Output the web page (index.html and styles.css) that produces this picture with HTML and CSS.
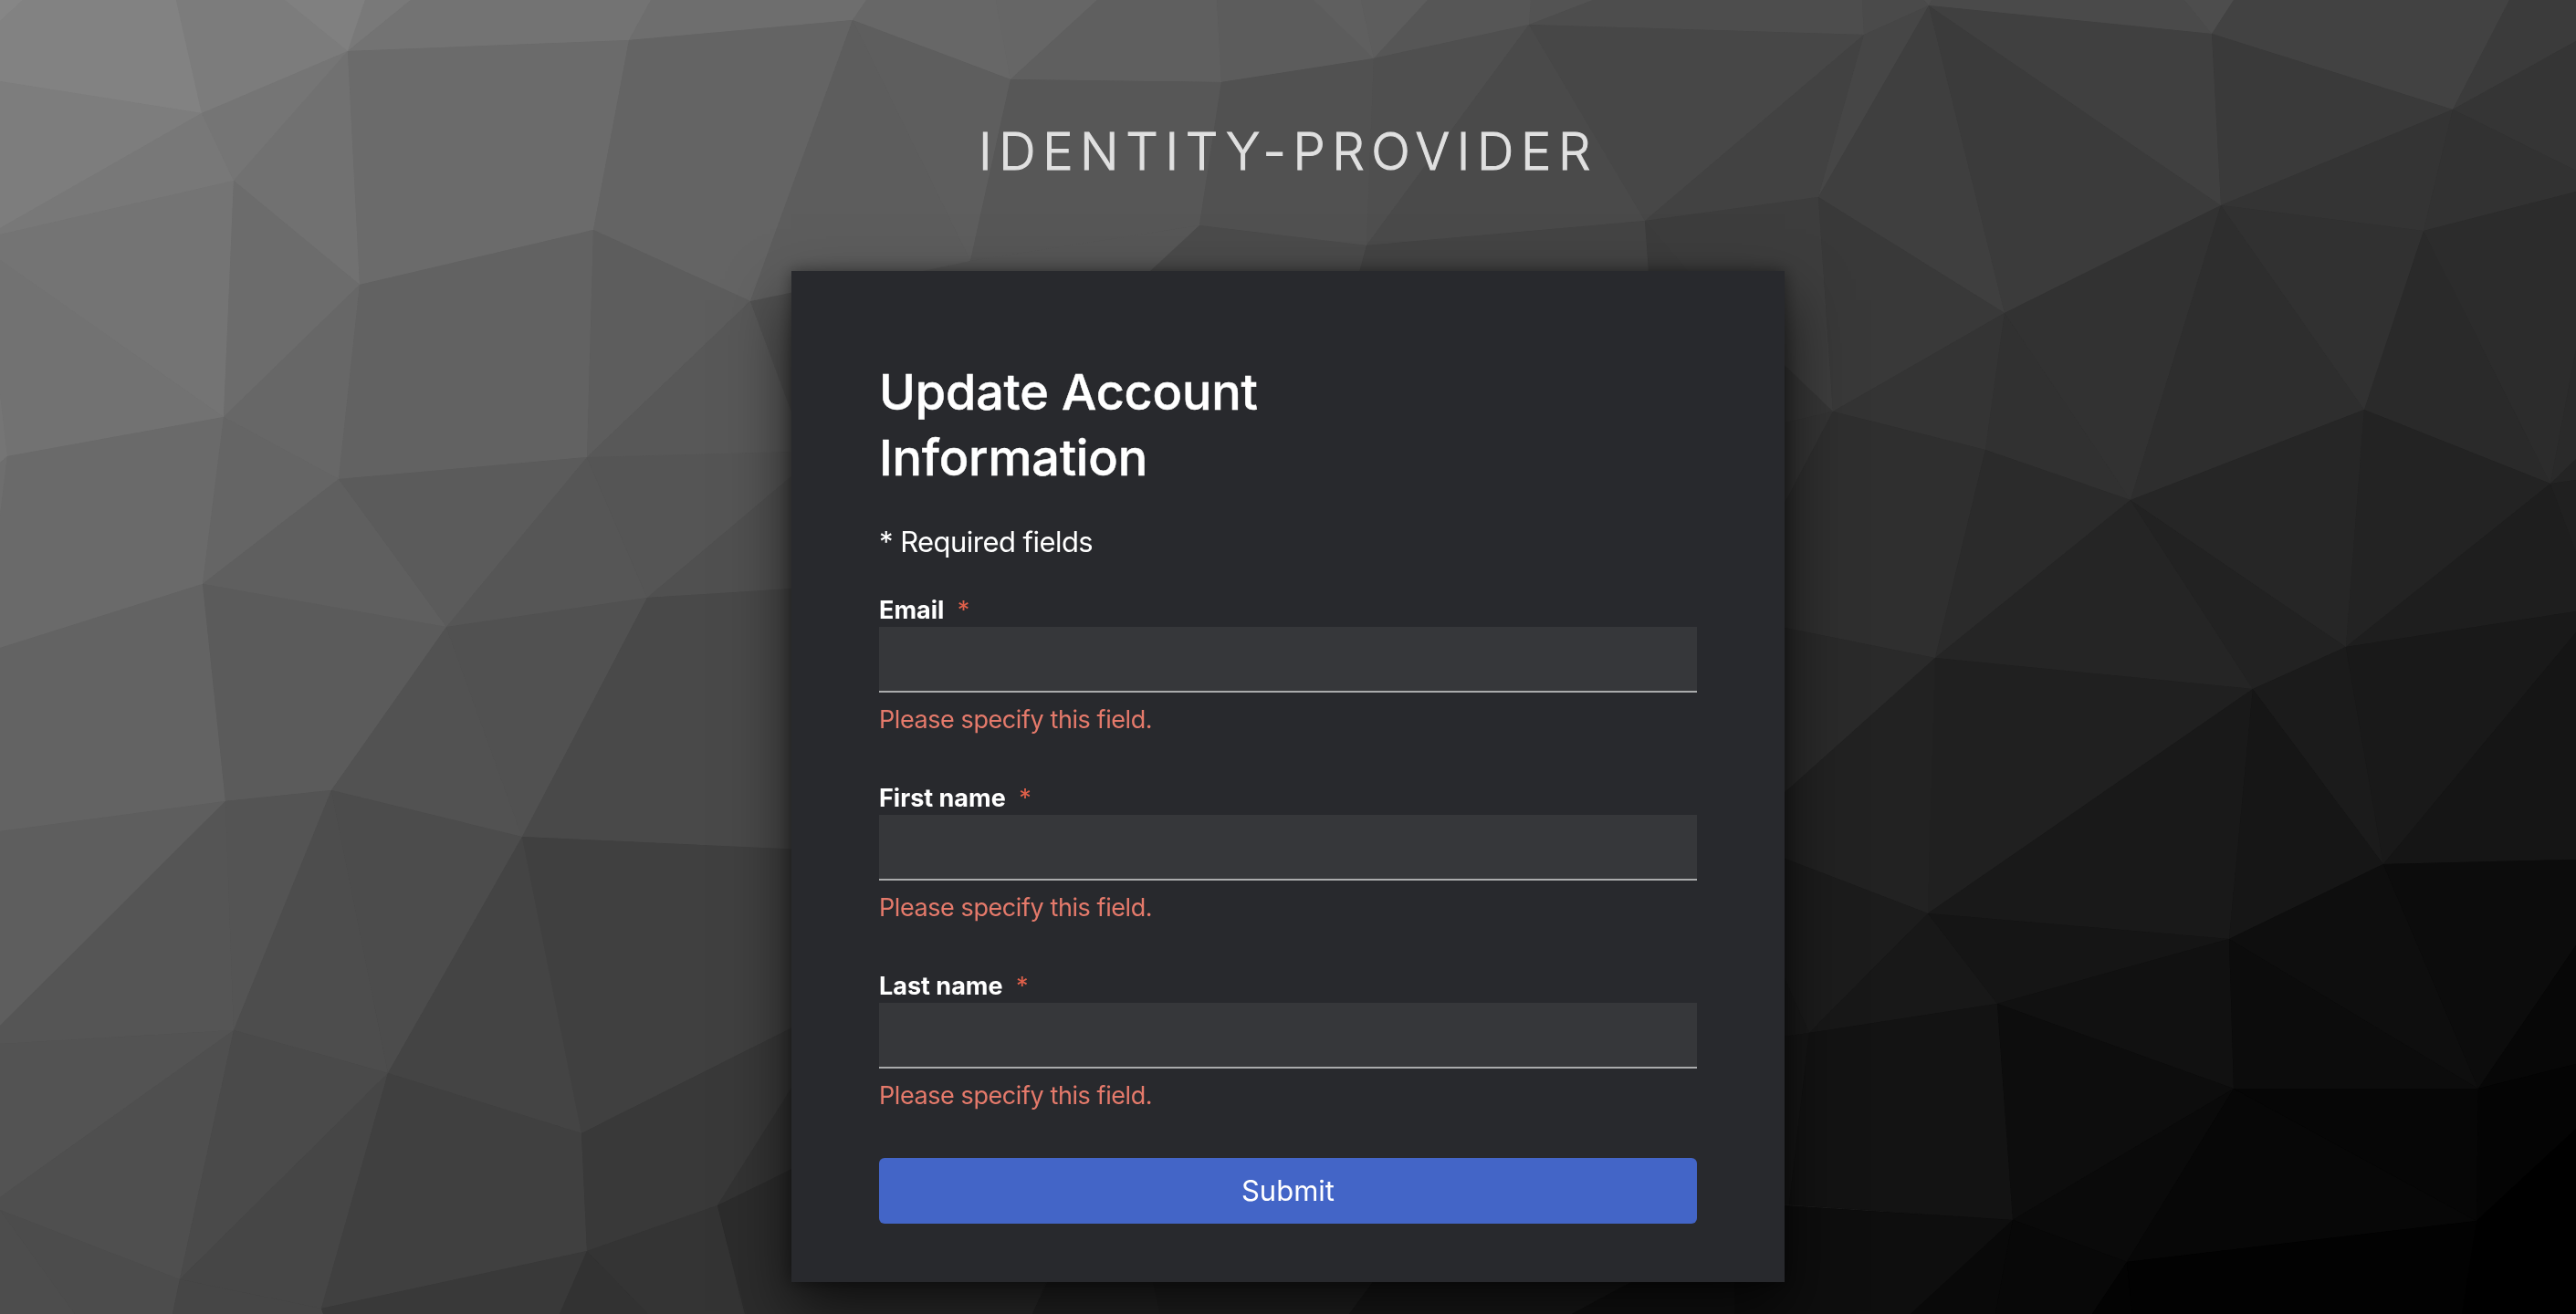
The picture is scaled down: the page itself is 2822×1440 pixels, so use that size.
FILE: index.html
```html
<!DOCTYPE html>
<html lang="en">
<head>
    <meta charset="UTF-8">
    <title>Update Account Information</title>
    <link rel="stylesheet" href="styles.css">
</head>
<body>
    <svg class="bg" viewBox="0 0 2822 1440" preserveAspectRatio="xMidYMid slice" aria-hidden="true">
        <defs>
            <linearGradient id="base" x1="0" y1="0" x2="1" y2="1">
                <stop offset="0" stop-color="#858585"/>
                <stop offset="0.5" stop-color="#454545"/>
                <stop offset="1" stop-color="#000"/>
            </linearGradient>
        </defs>
        <rect width="2822" height="1440" fill="url(#base)"/>
        <g id="mesh">
        <!-- left -->
        <polygon fill="#868686" points="0,0 25,0 0,23"/>
        <polygon fill="#828282" points="25,0 193,0 221,124 0,89 0,23"/>
        <polygon fill="#7c7c7c" points="193,0 312,0 381,56 221,124"/>
        <polygon fill="#808080" points="312,0 400,0 381,56"/>
        <polygon fill="#797979" points="400,0 450,0 381,56"/>
        <polygon fill="#737373" points="450,0 713,0 689,44 381,56"/>
        <polygon fill="#6e6e6e" points="713,0 949,0 934,22 689,44"/>
        <polygon fill="#7d7d7d" points="0,89 221,124 0,250"/>
        <polygon fill="#787878" points="0,250 221,124 256,198 0,257"/>
        <polygon fill="#757575" points="221,124 381,56 256,198"/>
        <polygon fill="#717171" points="381,56 394,312 256,198"/>
        <polygon fill="#6b6b6b" points="381,56 689,44 650,252 394,312"/>
        <polygon fill="#646464" points="689,44 934,22 822,330 650,252"/>
        <polygon fill="#747474" points="0,257 256,198 245,457 0,285"/>
        <polygon fill="#727272" points="0,285 245,457 8,500 0,432"/>
        <polygon fill="#757575" points="0,432 8,500 0,507"/>
        <polygon fill="#6e6e6e" points="0,507 8,500 0,565"/>
        <polygon fill="#6c6c6c" points="256,198 394,312 245,457"/>
        <polygon fill="#676767" points="394,312 371,525 245,457"/>
        <polygon fill="#626262" points="394,312 650,252 643,501 371,525"/>
        <polygon fill="#5d5d5d" points="650,252 822,330 643,501"/>
        <polygon fill="#6a6a6a" points="8,500 245,457 222,640 0,710 0,565"/>
        <polygon fill="#656565" points="245,457 371,525 222,640"/>
        <polygon fill="#5f5f5f" points="371,525 489,687 222,640"/>
        <polygon fill="#5b5b5b" points="371,525 643,501 489,687"/>
        <polygon fill="#565656" points="643,501 709,655 489,687"/>
        <polygon fill="#555555" points="643,501 900,494 867,522 709,655"/>
        <polygon fill="#585858" points="822,330 900,540 900,494 643,501"/>
        <polygon fill="#515151" points="822,330 900,312 900,540"/>
        <polygon fill="#505050" points="867,522 900,490 900,643 709,655"/>
        <polygon fill="#636363" points="0,710 222,640 247,878 0,911"/>
        <polygon fill="#5b5b5b" points="222,640 489,687 363,866 247,878"/>
        <polygon fill="#525252" points="489,687 572,917 363,866"/>
        <polygon fill="#515151" points="489,687 709,655 572,917"/>
        <polygon fill="#494949" points="709,655 900,643 900,932 572,917"/>
        <polygon fill="#5e5e5e" points="0,911 247,878 0,1124"/>
        <polygon fill="#555555" points="0,1124 247,878 256,1129 0,1144"/>
        <polygon fill="#545454" points="247,878 363,866 256,1129"/>
        <polygon fill="#4d4d4d" points="363,866 425,1176 256,1129"/>
        <polygon fill="#4c4c4c" points="363,866 572,917 425,1176"/>
        <polygon fill="#444444" points="572,917 637,1242 425,1176"/>
        <polygon fill="#404040" points="572,917 900,932 900,1110 637,1242"/>
        <polygon fill="#535353" points="0,1144 256,1129 0,1312"/>
        <polygon fill="#4f4f4f" points="0,1312 256,1129 197,1402 0,1326"/>
        <polygon fill="#4a4a4a" points="256,1129 425,1176 197,1402"/>
        <polygon fill="#464646" points="425,1176 352,1434 197,1402"/>
        <polygon fill="#404040" points="425,1176 637,1242 643,1371 352,1434"/>
        <polygon fill="#393939" points="637,1242 900,1110 900,1140 786,1321 643,1371"/>
        <polygon fill="#333333" points="786,1321 900,1140 900,1270"/>
        <polygon fill="#4d4d4d" points="0,1326 82,1440 0,1440"/>
        <polygon fill="#4c4c4c" points="0,1326 197,1402 189,1440 82,1440"/>
        <polygon fill="#464646" points="197,1402 352,1434 354,1440 189,1440"/>
        <polygon fill="#393939" points="352,1434 643,1371 613,1440 354,1440"/>
        <polygon fill="#323232" points="643,1371 710,1440 613,1440"/>
        <polygon fill="#343434" points="643,1371 786,1321 816,1440 710,1440"/>
        <polygon fill="#2c2c2c" points="786,1321 900,1265 1160,1370 1131,1440 816,1440"/>
        <!-- middle -->
        <polygon fill="#676767" points="949,0 1091,0 1107,87 934,22"/>
        <polygon fill="#666666" points="1091,0 1202,0 1107,87"/>
        <polygon fill="#5f5f5f" points="1202,0 1333,0 1338,90 1107,87"/>
        <polygon fill="#5c5c5c" points="1333,0 1439,0 1505,64 1338,90"/>
        <polygon fill="#5f5f5f" points="1439,0 1491,0 1505,64"/>
        <polygon fill="#5d5d5d" points="1491,0 1564,0 1505,64"/>
        <polygon fill="#565656" points="1564,0 1677,0 1675,27 1505,64"/>
        <polygon fill="#535353" points="1677,0 1745,0 1675,27"/>
        <polygon fill="#4d4d4d" points="1745,0 2040,0 2042,38 1675,27"/>
        <polygon fill="#5e5e5e" points="934,22 1107,87 1063,286"/>
        <polygon fill="#5d5d5d" points="934,22 1063,286 1011,300 870,320 822,330"/>
        <polygon fill="#575757" points="1107,87 1338,90 1314,247 1063,286"/>
        <polygon fill="#515151" points="1338,90 1505,64 1497,269 1314,247"/>
        <polygon fill="#4f4f4f" points="1505,64 1675,27 1497,269"/>
        <polygon fill="#4a4a4a" points="1675,27 1802,242 1497,269"/>
        <polygon fill="#474747" points="1675,27 2042,38 1802,242"/>
        <polygon fill="#575757" points="1011,297 1063,286 1314,247 1254,310 1000,310"/>
        <polygon fill="#4b4b4b" points="1314,247 1497,269 1486,310 1246,310"/>
        <polygon fill="#444444" points="1497,269 1802,242 1807,310 1486,310"/>
        <polygon fill="#3c3c3c" points="1802,242 1870,310 1807,310"/>
        <!-- right -->
        <polygon fill="#424242" points="1802,242 2042,38 1992,216"/>
        <polygon fill="#3d3d3d" points="1802,242 1992,216 2008,451 1940,386 1860,310"/>
        <polygon fill="#4a4a4a" points="2040,0 2108,0 2113,6 2042,38"/>
        <polygon fill="#4e4e4e" points="2108,0 2116,0 2113,6"/>
        <polygon fill="#4a4a4a" points="2116,0 2393,0 2423,37 2113,6"/>
        <polygon fill="#4d4d4d" points="2393,0 2447,0 2423,37"/>
        <polygon fill="#424242" points="2447,0 2749,0 2687,120 2423,37"/>
        <polygon fill="#3b3b3b" points="2749,0 2822,0 2822,45 2687,120"/>
        <polygon fill="#464646" points="2042,38 2113,6 1992,216"/>
        <polygon fill="#3f3f3f" points="2113,6 2196,343 1992,216"/>
        <polygon fill="#3b3b3b" points="2113,6 2433,225 2196,343"/>
        <polygon fill="#404040" points="2113,6 2423,37 2433,225"/>
        <polygon fill="#3a3a3a" points="2423,37 2687,120 2433,225"/>
        <polygon fill="#353535" points="2687,120 2822,45 2822,187"/>
        <polygon fill="#343434" points="2687,120 2655,253 2433,225"/>
        <polygon fill="#323232" points="2687,120 2822,187 2822,210 2655,253"/>
        <polygon fill="#393939" points="1992,216 2196,343 2008,451"/>
        <polygon fill="#343434" points="2196,343 2175,493 2008,451"/>
        <polygon fill="#313131" points="2196,343 2334,548 2175,493"/>
        <polygon fill="#323232" points="2196,343 2433,225 2334,548"/>
        <polygon fill="#2e2e2e" points="2433,225 2590,449 2334,548"/>
        <polygon fill="#313131" points="2433,225 2655,253 2590,449"/>
        <polygon fill="#2a2a2a" points="2655,253 2794,530 2590,449"/>
        <polygon fill="#2c2c2c" points="2655,253 2822,210 2822,383 2794,530"/>
        <polygon fill="#2a2a2a" points="2822,383 2822,503 2794,530"/>
        <polygon fill="#242424" points="2822,503 2822,526 2794,530"/>
        <polygon fill="#363636" points="1940,386 2008,451 1940,467"/>
        <polygon fill="#343434" points="1940,467 2008,451 1940,580"/>
        <polygon fill="#2f2f2f" points="2008,451 2175,493 2120,721 1940,685 1940,580"/>
        <polygon fill="#2b2b2b" points="2175,493 2334,548 2120,721"/>
        <polygon fill="#252525" points="2334,548 2468,755 2120,721"/>
        <polygon fill="#222222" points="2334,548 2570,709 2468,755"/>
        <polygon fill="#262626" points="2334,548 2590,449 2570,709"/>
        <polygon fill="#232323" points="2590,449 2794,530 2570,709"/>
        <polygon fill="#1e1e1e" points="2794,530 2822,605 2822,670 2570,709"/>
        <polygon fill="#202020" points="2794,530 2822,526 2822,605"/>
        <polygon fill="#2a2a2a" points="1940,685 2120,721 1940,882"/>
        <polygon fill="#222222" points="1940,882 2120,721 2112,1001 1940,935"/>
        <polygon fill="#202020" points="2120,721 2468,755 2112,1001"/>
        <polygon fill="#191919" points="2468,755 2442,1029 2112,1001"/>
        <polygon fill="#161616" points="2468,755 2611,947 2442,1029"/>
        <polygon fill="#1b1b1b" points="2468,755 2570,709 2611,947"/>
        <polygon fill="#191919" points="2570,709 2822,670 2822,693 2611,947"/>
        <polygon fill="#151515" points="2822,693 2822,942 2611,947"/>
        <polygon fill="#1c1c1c" points="1940,935 2112,1001 1982,1132 1940,1040"/>
        <polygon fill="#1a1a1a" points="1940,1040 1982,1132 1940,1138"/>
        <polygon fill="#181818" points="2112,1001 2188,1100 1982,1132"/>
        <polygon fill="#151515" points="2112,1001 2442,1029 2188,1100"/>
        <polygon fill="#111111" points="2442,1029 2447,1193 2188,1100"/>
        <polygon fill="#0c0c0c" points="2442,1029 2715,1193 2447,1193"/>
        <polygon fill="#0e0e0e" points="2442,1029 2611,947 2715,1193"/>
        <polygon fill="#0c0c0c" points="2611,947 2822,942 2822,1036 2715,1193"/>
        <polygon fill="#070707" points="2822,1036 2822,1166 2715,1193"/>
        <polygon fill="#161616" points="1940,1138 1982,1132 1960,1320 1940,1320"/>
        <polygon fill="#131313" points="1982,1132 2188,1100 2205,1337 1960,1320"/>
        <polygon fill="#0d0d0d" points="2188,1100 2447,1193 2205,1337"/>
        <polygon fill="#0a0a0a" points="2447,1193 2330,1383 2205,1337"/>
        <polygon fill="#070707" points="2447,1193 2713,1338 2330,1383"/>
        <polygon fill="#060606" points="2447,1193 2715,1193 2713,1338"/>
        <polygon fill="#040404" points="2715,1193 2822,1166 2822,1237 2713,1338"/>
        <polygon fill="#000000" points="2822,1237 2822,1440 2697,1440 2713,1338"/>
        <polygon fill="#0e0e0e" points="1900,1318 2205,1337 2093,1440 1900,1440"/>
        <polygon fill="#090909" points="2205,1337 2186,1440 2093,1440"/>
        <polygon fill="#080808" points="2205,1337 2330,1383 2292,1440 2186,1440"/>
        <polygon fill="#030303" points="2330,1383 2336,1440 2292,1440"/>
        <polygon fill="#020202" points="2330,1383 2713,1338 2697,1440 2336,1440"/>
        <!-- below the card -->
        <polygon fill="#242424" points="1155,1390 1260,1390 1271,1440 1131,1440"/>
        <polygon fill="#212121" points="1260,1390 1515,1390 1478,1440 1271,1440"/>
        <polygon fill="#191919" points="1515,1390 1815,1390 1722,1440 1478,1440"/>
        <polygon fill="#111111" points="1815,1390 1900,1390 1900,1440 1722,1440"/>
        </g>
        <!-- second pass closes the hairlines between neighbouring facets -->
        <use href="#mesh"/>
        <use href="#mesh"/>
    </svg>

    <div class="login">
        <header class="login-header">Identity-provider</header>

        <main class="card">
            <h1 class="card-title">Update Account Information</h1>
            <p class="required-text">* Required fields</p>

            <form class="form">
                <div class="form-group">
                    <label class="form-label" for="email">Email <span class="star">*</span></label>
                    <input class="form-control" type="text" id="email" name="email">
                    <span class="form-error">Please specify this field.</span>
                </div>
                <div class="form-group">
                    <label class="form-label" for="firstName">First name <span class="star">*</span></label>
                    <input class="form-control" type="text" id="firstName" name="firstName">
                    <span class="form-error">Please specify this field.</span>
                </div>
                <div class="form-group">
                    <label class="form-label" for="lastName">Last name <span class="star">*</span></label>
                    <input class="form-control" type="text" id="lastName" name="lastName">
                    <span class="form-error">Please specify this field.</span>
                </div>
                <button class="button" type="button">Submit</button>
            </form>
        </main>
    </div>
</body>
</html>
```

FILE: styles.css
```css
* {
    box-sizing: border-box;
}
body {
    margin: 0;
    height: 100vh;
    overflow: hidden;
    font-family: Inter, "Open Sans", sans-serif;
    background-color: #000;
    color: #fff;
}
.bg {
    position: fixed;
    top: 0;
    left: 0;
    z-index: -1;
    width: 100%;
    height: 100%;
}
.login {
    width: 1088px;
    margin: 0 auto;
}
.login-header {
    height: 297px;
    padding-top: 130px;
    font-size: 56px;
    font-weight: 300;
    line-height: 72px;
    letter-spacing: 7.6px;
    text-align: center;
    text-transform: uppercase;
    color: #e0e0e0;
    -webkit-text-stroke: 1px #e0e0e0;
}
.card {
    height: 1108px;
    padding: 97px 96px 64px;
    background-color: #28292d;
    box-shadow: 0 32px 64px rgba(0, 0, 0, 0.64), 0 0 16px rgba(0, 0, 0, 0.4);
}
.card-title {
    width: 600px;
    margin: 0;
    font-size: 54px;
    font-weight: 500;
    line-height: 72px;
    letter-spacing: -0.2px;
    -webkit-text-stroke: 0.5px #fff;
}
.required-text {
    margin: 32px 0 0;
    font-size: 31px;
    line-height: 48px;
    letter-spacing: -0.55px;
}
.form {
    display: flex;
    flex-direction: column;
    margin-top: 31px;
}
.form-group {
    display: flex;
    flex-direction: column;
    height: 206px;
}
.form-label {
    height: 38px;
    padding-top: 1px;
    font-size: 27px;
    font-weight: 700;
    line-height: 38px;
}
.star {
    margin-left: 8px;
    font-weight: 400;
    color: #e0604a;
}
.form-control {
    width: 100%;
    height: 72px;
    padding: 0 16px;
    border: 0;
    border-bottom: 2px solid #aaabac;
    background-color: #36373a;
    color: #fff;
    font-size: 32px;
    outline: none;
}
.form-error {
    margin-top: 9px;
    font-size: 27px;
    line-height: 42px;
    letter-spacing: -0.42px;
    color: #e57a6b;
}
.button {
    height: 72px;
    margin-top: 2px;
    padding-bottom: 3px;
    border: 0;
    border-radius: 6px;
    background-color: #4365c7;
    color: #fff;
    font-family: inherit;
    font-size: 31px;
}
```
